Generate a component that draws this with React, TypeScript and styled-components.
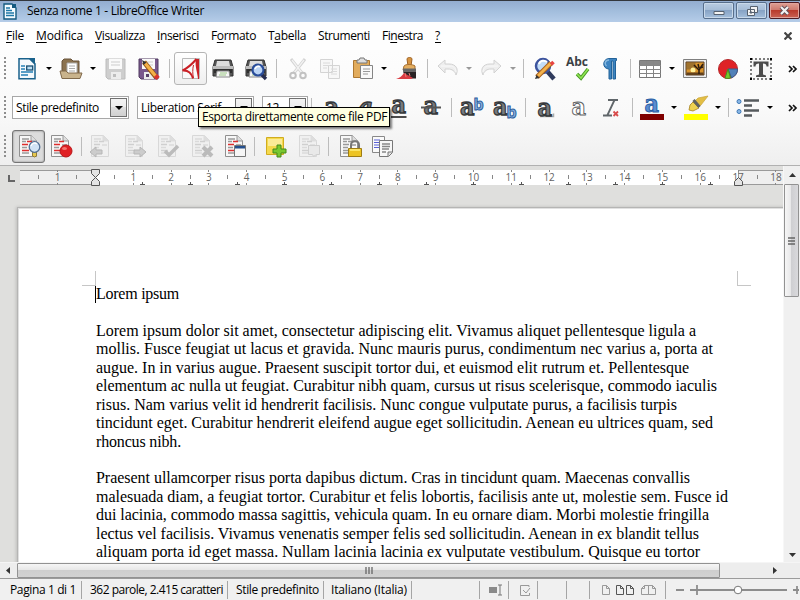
import React, { useLayoutEffect, useRef, useState } from 'react';
import styled, { createGlobalStyle, css } from 'styled-components';

const GlobalStyle = createGlobalStyle`
  * { box-sizing: border-box; }
  body { margin: 0; overflow: hidden; background: #dfdfdd; }
`;

const Window = styled.div`
  width: 800px;
  height: 600px;
  display: flex;
  flex-direction: column;
  overflow: hidden;
  color: #000;
  font: 12px/16px 'Open Sans', 'Noto Sans', sans-serif;
`;

/* Text that is tracked so that it fills a known measure. */
const Measure = styled.span`
  display: inline-block;
  flex: none;
  white-space: pre;
`;

function FitText({ width, children }: { width: number; children: React.ReactNode }) {
  const ref = useRef<HTMLSpanElement>(null);
  const [tracking, setTracking] = useState(0);
  useLayoutEffect(() => {
    const el = ref.current;
    if (!el) return;
    const range = document.createRange();
    range.selectNodeContents(el);
    const count = (el.textContent || ' ').length;
    setTracking((width - range.getBoundingClientRect().width) / count);
  }, [width]);
  return <Measure ref={ref} style={{ letterSpacing: tracking, width }}>{children}</Measure>;
}

/* ---------- Title bar ---------- */
const TitleBar = styled.header`
  height: 22px;
  flex: none;
  display: flex;
  align-items: center;
  padding-left: 3px;
  border-top: 1px solid #33373d;
  background: linear-gradient(#93add0, #a3bedd 50%, #b5cce8);
`;
const TitleText = styled.div`
  margin: 0 auto 1px 10px;
`;
const Caption = styled.div<{ $close?: boolean }>`
  width: 31px;
  height: 17px;
  margin: -2px 0 0 2px;
  display: grid;
  place-items: center;
  border: 1px solid ${p => (p.$close ? '#4d1c24' : '#586f8c')};
  border-radius: 2px;
  box-shadow: inset 0 0 0 1px ${p => (p.$close ? '#e0a49c' : '#c9d9ea')};
  background: ${p =>
    p.$close
      ? 'linear-gradient(#dfa094, #ce7a6e 45%, #b93a2c 50%, #c96355)'
      : 'linear-gradient(#b9cce2, #a6bdd7 45%, #87a3c5 50%, #a5bfdc)'};
`;
const Captions = styled.div`
  display: flex;
`;

/* ---------- Menu ---------- */
const MenuBar = styled.nav`
  height: 28px;
  flex: none;
  display: flex;
  align-items: center;
  gap: 12px;
  padding: 0 8px 0 6px;
  background: #fefefe;
  svg { margin-left: auto; margin-top: -1px; }
`;
const Key = styled.span`
  text-decoration: underline;
  text-underline-offset: 2px;
`;

/* ---------- Toolbars ---------- */
const ToolArea = styled.div`
  height: 116px;
  flex: none;
  display: flex;
  flex-direction: column;
  border-bottom: 1px solid #b1b1b1;
  background: linear-gradient(#fdfdfd, #f9f9f9 55%, #efefef);
`;
const ToolRow = styled.div<{ $h: number }>`
  height: ${p => p.$h}px;
  display: flex;
  align-items: center;
  padding-left: 4px;
`;
const Grip = styled.div`
  width: 2px;
  height: 23px;
  flex: none;
  background: repeating-linear-gradient(#8e8e8e 0 2px, transparent 2px 4px);
`;
const Slot = styled.div<{ $gap: number }>`
  width: 24px;
  height: 24px;
  flex: none;
  margin-left: ${p => p.$gap}px;
  svg { display: block; overflow: visible; }
`;
const More = styled.div<{ $gap: number }>`
  width: 10px;
  flex: none;
  margin-left: ${p => p.$gap}px;
  svg { display: block; }
`;
const Button = styled.div<{ $gap: number; $pressed?: boolean }>`
  width: 33px;
  height: 33px;
  flex: none;
  margin-left: ${p => p.$gap}px;
  display: grid;
  place-items: center;
  border: 1px solid #b5b5b5;
  border-radius: 3px;
  background: linear-gradient(#fff, #efefef);
  ${p => p.$pressed && css`
    border-color: #757575;
    background: #dcdcdc;
    box-shadow: inset 0 0 2px #777;
  `}
`;
const Separator = styled.div<{ $gap: number }>`
  width: 1px;
  height: 19px;
  flex: none;
  margin-left: ${p => p.$gap}px;
  background: #bcbcbc;
`;
const Arrow = styled.div<{ $gap: number; $dim?: boolean }>`
  width: 8px;
  flex: none;
  margin-left: ${p => p.$gap}px;
  display: flex;
  justify-content: center;
  &::after {
    content: '';
    border: 3px solid transparent;
    border-width: 3px 3px 0;
    border-top-color: ${p => (p.$dim ? '#999' : '#000')};
  }
`;
const Combo = styled.div<{ $w: number; $gap: number }>`
  width: ${p => p.$w}px;
  height: 23px;
  flex: none;
  margin-left: ${p => p.$gap}px;
  padding: 0 1px 0 3px;
  display: flex;
  align-items: center;
  justify-content: space-between;
  border: 1px solid #a8a8a8;
  background: #fff;
`;
const ComboButton = styled.div`
  width: 17px;
  height: 19px;
  display: grid;
  place-items: center;
  border: 1px solid #707070;
  background: linear-gradient(#f3f3f3, #ececec 50%, #dedede 50%, #d0d0d0);
  &::after {
    content: '';
    border: 4px solid transparent;
    border-width: 4px 4px 0;
    border-top-color: #000;
  }
`;
const TipAnchor = styled.div`
  position: relative;
  height: 0;
`;
const Tooltip = styled.div`
  position: absolute;
  left: 198px;
  top: -21px;
  width: 192px;
  height: 20px;
  padding: 1px 0 0 3px;
  border: 1px solid #000;
  background: #ffffe1;
  box-shadow: 2px 2px 2px rgba(0, 0, 0, 0.5);
`;

/* ---------- Workspace ---------- */
const Workspace = styled.main`
  height: 396px;
  flex: none;
  display: grid;
  grid-template-columns: 783px 17px;
`;
const Desk = styled.div`
  height: 396px;
  overflow: hidden;
  background: #dfdfdd;
`;
const RulerRow = styled.div`
  height: 41px;
  padding-top: 4px;
  svg { display: block; overflow: visible; }
`;
const Page = styled.article`
  width: 780px;
  height: 420px;
  margin-left: 17px;
  padding-left: 64px;
  border: solid #b5b5b4;
  border-width: 1px 0 0 1px;
  box-shadow: inset 1px 1px #e1e1e1, -1px 0 3px #bdbdbc;
  background: #fff;
`;
const Corners = styled.div`
  display: flex;
  gap: 641px;
  padding-top: 63px;
`;
const Corner = styled.i<{ $right?: boolean }>`
  width: 14px;
  height: 15px;
  border: solid #c6c6c6;
  border-width: ${p => (p.$right ? '0 0 1px 1px' : '0 1px 1px 0')};
`;
const Lines = styled.div`
  margin: -1px 0 0 13px;
  border-left: 1px solid transparent;
  font: 16px/18.45px 'Liberation Serif', serif;
`;
const Line = styled.div<{ $caret?: boolean }>`
  height: 18.45px;
  margin-left: -1px;
  border-left: 1px solid ${p => (p.$caret ? '#000' : 'transparent')};
`;
const VScroll = styled.div`
  height: 396px;
  display: flex;
  flex-direction: column;
  align-items: flex-start;
  background: #f0f0f0;
  border-left: 1px solid #f7f7f7;
`;
const HScroll = styled.div`
  height: 16px;
  flex: none;
  display: flex;
  align-items: center;
  background: #ededed;
  border-top: 1px solid #f5f5f5;
`;
const ScrollEnd = styled.div<{ $w: number; $h: number }>`
  width: ${p => p.$w}px;
  height: ${p => p.$h}px;
  flex: none;
  display: grid;
  place-items: center;
`;
const Thumb = styled.div<{ $vertical?: boolean }>`
  display: grid;
  place-items: center;
  border: 1px solid #929292;
  border-radius: 1px;
  ${p => p.$vertical
    ? css`width: 15px; height: 113px; background: linear-gradient(90deg, #f6f6f6, #e9e9ea 42%, #cfcfd2 50%, #d9d9dc);`
    : css`width: 703px; height: 15px; background: linear-gradient(#f6f6f6, #e7e7e7 45%, #cecece 50%, #d2d2d2);`}
`;
const Filler = styled.div`flex: 1;`;

/* ---------- Status bar ---------- */
const StatusBar = styled.footer`
  height: 22px;
  flex: none;
  display: flex;
  align-items: center;
  padding-top: 1px;
  border-top: 1px solid #9b9b9b;
  background: #f0f0f0;
`;
const Status = styled.div<{ $w: number; $pad?: number }>`
  width: ${p => p.$w}px;
  height: 18px;
  flex: none;
  display: flex;
  align-items: center;
  padding-left: ${p => p.$pad ?? 0}px;
  border-right: 1px solid #a5a5a5;
`;
const Zoom = styled.div`
  padding-left: 9px;
  svg { display: block; }
`;

/* ---------- Icons ---------- */
const Svg = ({ children, w = 24, h = 24 }: { children: React.ReactNode; w?: number; h?: number }) => (
  <svg width={w} height={h} viewBox={`0 0 ${w} ${h}`} fill="none">{children}</svg>
);

const WriterIcon = () => (
  <Svg w={14} h={17}>
    <path d="M1 1h8l4 4v11H1z" fill="#f5fbff" stroke="#145a80" strokeWidth="1.4" />
    <path d="M9 1v4h4V1z" fill="#145a80" />
    <path d="M3 5h4M3 7.5h6M3 10h8M3 12.5h8" stroke="#1e78a8" strokeWidth="1.3" />
  </Svg>
);
const NewDoc = () => (
  <Svg>
    <path d="M4 1.7h11l5 5v15H4z" fill="#f4f9fc" stroke="#1a628c" strokeWidth="1.5" />
    <path d="M13 1h7v7z" fill="#1a628c" />
    <path d="M6 9h4M6 12h4M6 15h12M6 18h7" stroke="#2580b5" strokeWidth="1.6" />
    <rect x="11.7" y="9" width="6" height="4" fill="#b9dcf2" stroke="#164f73" strokeWidth="1.3" />
  </Svg>
);
const OpenFolder = () => (
  <Svg>
    <path d="M3 20V4l2-2h7l2 2h6v15" fill="#8b724f" stroke="#69533a" />
    <path d="M8 6h10v11H8z" fill="#fff" stroke="#aaa" />
    <path d="M10 9h6M10 11.5h6M10 14h6" stroke="#aaa" />
    <path d="M1 14h6l2 2h14l-2 5.5H3z" fill="#c9b38c" stroke="#80694b" />
  </Svg>
);
const Floppy = ({ edit }: { edit?: boolean }) => (
  <Svg>
    <path d="M2 2h19v20H4l-2-2z" fill={edit ? '#79588c' : '#cecece'} stroke={edit ? '#513a60' : '#bcbcbc'} />
    <path d="M5 2h13v10H5z" fill="#fafafa" />
    <path d="M7 5h9M7 8h9" stroke="#ccc" />
    <path d="M7 15h10v7H7z" fill="#ececec" />
    <path d="M9 17h3v3H9z" fill={edit ? '#58406a' : '#bdbdbd'} />
    {edit && (
      <>
        <path d="M7 5 19 20" stroke="#945512" strokeWidth="5" />
        <path d="M7.5 5.5 19 19.5" stroke="#f4b047" strokeWidth="3.2" />
        <path d="m18.500 18.500 2.500 3" stroke="#d8322d" strokeWidth="4.5" />
        <path d="m5 3 1.5 5 3-2.4z" fill="#333" />
      </>
    )}
  </Svg>
);
const PdfIcon = () => (
  <Svg>
    <path d="M3.5 1.500h17v20h-17z" fill="#fafafa" stroke="#b9b9b9" />
    <path d="M17.500 2C14 6 9 11 3.500 13.500c5.500-.500 9 2.500 10.500 8" stroke="#ca2026" strokeWidth="2" />
    <path d="M17 2h3v20h-1c-.500-7-3.500-13-2-20z" fill="#ca2026" />
    <path d="M14.500 8c-1 4-1 9 0 13" stroke="#ca2026" strokeWidth="1" />
  </Svg>
);
const Printer = ({ lens }: { lens?: boolean }) => (
  <Svg>
    <path d="M4 3h16l2 7v9H2v-9z" fill="#555" stroke="#323232" />
    <path d="M6 4h12l1 5H5z" fill="#ddd" />
    <path d="M2 9h20v3H2z" fill="#bdbdbd" />
    <path d="M3 12h18v4H3z" fill="#303030" />
    <path d="M6 14h12l1 6H5z" fill="#f6f6f6" stroke="#888" />
    <path d="M9 16h7M8 18h7" stroke="#9bc785" strokeWidth="1.2" />
    {lens && (
      <>
        <path d="m17 17 5 5" stroke="#252d50" strokeWidth="3.4" />
        <circle cx="14" cy="13" r="5.5" fill="#bbd4f4" stroke="#294d9a" strokeWidth="2.2" />
        <path d="M11 12c1-3 4-3 5-2" stroke="#fff" strokeWidth="1.5" />
      </>
    )}
  </Svg>
);
const Scissors = () => (
  <Svg>
    <path d="m5 2 11 14M19 2 8 16" stroke="#d3d3d3" strokeWidth="3" />
    <path d="m6 3 10 13M18 3 8 16" stroke="#f2f2f2" strokeWidth="1.3" />
    <circle cx="7" cy="18.500" r="2.800" stroke="#c2c2c2" strokeWidth="2" />
    <circle cx="17" cy="18.500" r="2.800" stroke="#c2c2c2" strokeWidth="2" />
  </Svg>
);
const Copy = () => (
  <Svg>
    <path d="M2.5 2.5h12v13h-12zM10.500 8.500h11v13h-11z" fill="#f7f7f7" stroke="#d4d4d4" />
    <path d="M5 6h7M5 8.500h7M5 11h4M13 12h6M13 14.500h6M13 17h6" stroke="#dadada" />
  </Svg>
);
const Paste = () => (
  <Svg>
    <path d="M2.500 3.500h16v17h-16z" fill="#e2ac5d" stroke="#ae7831" />
    <path d="M6 5V3h2l1-2h4l1 2h2v3H6z" fill="#ddd" stroke="#777" />
    <path d="M9.500 8.500h12v13h-12z" fill="#fafafa" stroke="#858585" />
    <path d="M12 12h7M12 14.500h7M12 17h5" stroke="#999" strokeWidth="1.2" />
  </Svg>
);
const Brush = () => (
  <Svg>
    <path d="M12 2c0-2 5-2 5 0l-1 7h-3z" fill="#d69442" stroke="#9e6122" />
    <path d="M9 9c1-2 9-2 11 0v4H8z" fill="#e4ae60" stroke="#a66f30" />
    <path d="M8 11.500h13v3H8z" fill="#666" />
    <path d="M8 14.500h13v7H11z" fill="#292325" />
    <path d="M1 22c4-1 6-3 8-6l9 5-2 1z" fill="#d93b42" />
    <path d="m10 16 1 4m3-4 1 3" stroke="#ee7c76" />
  </Svg>
);
const Undo = ({ flip }: { flip?: boolean }) => (
  <Svg>
    <g transform={flip ? 'matrix(-1 0 0 1 24 0)' : undefined}>
      <path d="m2 9 7-6v4h4c7 0 10 5 7 11-1-4-4-6-8-6H9v4z" fill="#eee" stroke="#d2d2d2" strokeLinejoin="round" />
      <path d="M5 9h9c4 0 6 3 6 6" stroke="#f9f9f9" />
    </g>
  </Svg>
);
const FindReplace = () => (
  <Svg>
    <path d="m15 14 7 8" stroke="#303b5d" strokeWidth="4.500" />
    <circle cx="11" cy="9" r="7" fill="#c2dcf7" stroke="#3d549e" strokeWidth="2.500" />
    <path d="M7 7c1-4 6-4 8-2" stroke="#fff" strokeWidth="2" />
    <path d="m5 20 14-14" stroke="#a55e1b" strokeWidth="5" />
    <path d="m6 19 13-13" stroke="#f4b34d" strokeWidth="3" />
    <path d="m19 5 2.500 2.500" stroke="#e64443" strokeWidth="3.500" />
    <path d="m3 22 1.500-4 3 3z" fill="#333" />
  </Svg>
);
const Spell = styled.div`
  display: flex;
  flex-direction: column;
  align-items: center;
  margin: -1px -4px;
  color: #3b4144;
  font: bold 12px/12px 'Open Sans', sans-serif;
  svg { margin: 0 0 0 10px; }
`;
const Pilcrow = () => (
  <Svg>
    <path d="M11 1.500h7.500V3.500h-1v18.500H15V4h-1.500v18H11V12C4 12 4 2 11 1.500z" fill="#3d84c1" stroke="#236298" />
    <path d="M11 3c-4 0-5 4-2.500 6" stroke="#86b8df" strokeWidth="1.500" />
  </Svg>
);
const Table = () => (
  <Svg>
    <path d="M1.500 3.500h21v17h-21z" fill="#fff" stroke="#777" />
    <path d="M2 4h20v4H2z" fill="#878787" />
    <path d="M1 8.500h22M1 12.500h22M1 16.500h22M8.500 4v16M15.500 4v16" stroke="#858585" />
  </Svg>
);
const Picture = () => (
  <Svg>
    <path d="M.500 2.500h23v18H.500z" fill="#eee" stroke="#7f7f7f" />
    <path d="M3 5h18v13H3z" fill="#d9942c" stroke="#573c25" />
    <path d="M3.500 5.500h9v7h-9z" fill="#6f552f" opacity=".55" />
    <circle cx="10" cy="13" r="2.500" fill="#fff09a" />
    <path d="M3.500 15.500h17V18h-17z" fill="#62411c" />
    <path d="M16 17v-4l-5-5m5 5 4-6m-4 4-1-4m2 4 3-1" stroke="#2b1b10" strokeWidth="1.500" />
  </Svg>
);
const Chart = () => (
  <Svg>
    <circle cx="12" cy="12" r="9.500" fill="#df2226" stroke="#b5282b" />
    <path d="M12 12h9.500a9.500 9.500 0 0 1-6 8.800z" fill="#5281b8" stroke="#355e91" />
    <path d="m12 12 2.500 9c-2 .600-4 .600-5.500 0z" fill="#73c92c" stroke="#4a8d20" />
  </Svg>
);
const TextBox = () => (
  <Svg>
    <path d="M2 2h20v20H2z" fill="#f7f7f7" stroke="#000" strokeDasharray="2 2" />
    <path d="M1 1h2v2H1zM21 1h2v2h-2zM1 21h2v2H1zM21 21h2v2h-2z" fill="#000" />
    <path d="M4.500 4.500h15v5h-2c0-2-1-3-3.500-3v11l3 1v1.500H7V18.500l3-1v-11c-2.500 0-3.500 1-3.500 3h-2z" fill="#4c4c4c" />
  </Svg>
);
const Chevron = () => (
  <Svg w={10} h={8}><path d="m1 1 3 3-3 3m4-6 3 3-3 3" stroke="#111" strokeWidth="1.700" /></Svg>
);

type Kind = 'bold' | 'italic' | 'under' | 'strike' | 'super' | 'sub' | 'shadow' | 'outline' | 'color';
const BASELINE: Record<Kind, number> = {
  bold: 19, italic: 19, under: 17, strike: 18, super: 18.5, sub: 18.5, shadow: 20, outline: 19, color: 16,
};
function Letter({ kind }: { kind: Kind }) {
  const small = kind === 'super' || kind === 'sub';
  const outline = kind === 'outline';
  const blue = kind === 'color';
  const font = 'DejaVu Serif, serif';
  const y = BASELINE[kind];
  return (
    <Svg>
      {blue && <path d="M0 18h24v6H0z" fill="#800000" />}
      {kind === 'shadow' && <path d="M7 20.500h13.500v-3" stroke="#aaa" strokeWidth="1.500" />}
      <text
        x={small ? 1 : 4.5} y={y} fontFamily={font} fontWeight="bold" fontSize="25"
        fontStyle={kind === 'italic' ? 'italic' : 'normal'}
        fill={outline ? '#fff' : blue ? '#5b8dd1' : '#777b7e'}
        stroke={outline ? '#5f6264' : blue ? '#285da4' : '#35383a'} strokeWidth={outline || blue ? 1 : 1.3}
        textLength={14.500} lengthAdjust="spacingAndGlyphs"
      >a</text>
      {small && (
        <text x="14.500" y={kind === 'super' ? 13.500 : 22} fontFamily="Open Sans, sans-serif" fontWeight="bold" fontSize="16"
          fill="#8db3e0" stroke="#2d609e" strokeWidth="1">b</text>
      )}
      {kind === 'under' && <path d="M4 21h15.500" stroke="#4c4c4c" strokeWidth="2" />}
      {kind === 'strike' && <path d="M2 11.500h20" stroke="#555" strokeWidth="2" />}
    </Svg>
  );
}
const ClearFormat = () => (
  <Svg>
    <path d="M7 4h10M2 19.500h9M13.500 4 6.500 19" stroke="#60666a" strokeWidth="1.800" />
    <path d="m12.500 15.500 4.500 4.500m0-4.500-4.500 4.500" stroke="#d84b4b" strokeWidth="1.800" />
  </Svg>
);
const Highlight = () => (
  <Svg>
    <path d="M14 2 24 0l-7 9-5 4-4-5z" fill="#e3be45" stroke="#c9a53a" strokeWidth=".7" />
    <path d="m9 6 6 6-6 3-4-1 1-5z" fill="#eed250" stroke="#a6821e" strokeWidth=".8" />
    <path d="m9.500 4 6 7" stroke="#5e6262" strokeWidth="3" />
    <path d="M0 18h24v6H0z" fill="#ff0" />
  </Svg>
);
const Bullets = () => (
  <Svg>
    <circle cx="3" cy="5.500" r="2" fill="#8bb8e6" stroke="#3e78b6" />
    <circle cx="3" cy="15.500" r="2" fill="#8bb8e6" stroke="#3e78b6" />
    <path d="M8 4.500h15M8 9.500h8M8 14.500h15M8 19.500h8" stroke="#555a5d" strokeWidth="2.300" />
  </Svg>
);

type Mark = 'lens' | 'record' | 'left' | 'right' | 'check' | 'x' | 'window' | 'bubble' | 'lock';
function ChangeDoc({ mark }: { mark: Mark }) {
  const dim = ['left', 'right', 'check', 'x', 'bubble'].includes(mark);
  const line = dim ? '#dadada' : '#9a9a9a';
  const red = dim ? '#cfcfcf' : mark === 'lock' ? '#999' : '#dd2e2e';
  return (
    <Svg>
      <path d="M2.500 1.500h12l5 5v16h-17z" fill={dim ? '#f0f0f0' : '#f7f7f7'} stroke={dim ? '#d8d8d8' : '#909090'} />
      <path d="M14 1v6h6" fill="#ddd" stroke={dim ? '#ddd' : '#999'} />
      <path d="M5 5h7M5 7.500h4M13 11h5M5 13.500h5M5 19h7" stroke={line} strokeWidth="1.300" />
      <path d="M10 7.500h5M5 10.500h6M5 16.500h7" stroke={red} strokeWidth="1.500" />
      {mark === 'lens' && (
        <>
          <path d="M15.500 18h4v4l-2 1-2-1z" fill="#e5c74f" stroke="#907a35" />
          <circle cx="17.500" cy="13" r="5.300" fill="#d2e3f4" stroke="#547195" strokeWidth="1.300" />
          <path d="M14 12c1-3 4-4 6-2" stroke="#fff" strokeWidth="1.500" />
        </>
      )}
      {mark === 'record' && <><circle cx="17" cy="17" r="6" fill="#e02024" stroke="#ba1719" /><ellipse cx="15.500" cy="14.500" rx="2.500" ry="1.500" fill="#f37771" /></>}
      {mark === 'left' && <path d="m1 18 6-5v3h6v4H7v3z" fill="#ccc" stroke="#b6b6b6" />}
      {mark === 'right' && <path d="m23 18-6-5v3h-6v4h6v3z" fill="#ccc" stroke="#b6b6b6" />}
      {mark === 'check' && <path d="m9 17 4 4 9-9" stroke="#bbb" strokeWidth="3.500" />}
      {mark === 'x' && <path d="m13 13 9 9m0-9-9 9" stroke="#bbb" strokeWidth="4" />}
      {mark === 'window' && <><path d="M11.500 11.500h11v11h-11z" fill="#f6f6f6" stroke="#777" /><path d="M12 12h10v2.500H12z" fill="#244f8d" /></>}
      {mark === 'bubble' && <path d="M11.500 11.500h11v9h-3l-3 2-1-2h-4z" fill="#e9e9e9" stroke="#cfcfcf" />}
      {mark === 'lock' && <><path d="M13 15v-4c0-5 8-5 8 0v4" stroke="#777" strokeWidth="2" /><path d="M10.500 14.500h13v8h-13z" fill="#edc424" stroke="#9e7c14" /><path d="M12 16h10" stroke="#fff07d" strokeWidth="1.500" /></>}
    </Svg>
  );
}
const AddNote = () => (
  <Svg>
    <path d="M2.500 3.500h17v17h-17z" fill="#f5d94d" stroke="#d0ac20" />
    <path d="M4 5h14v7H4z" fill="#fceb96" />
    <path d="M13 11h4v4h5v4h-5v4h-4v-4H9v-4h4z" fill="#78c82f" stroke="#458918" />
  </Svg>
);
const Compare = () => (
  <Svg>
    <path d="M2.500 2.500h12v16h-12z" fill="#fafafa" stroke="#888" />
    <path d="M4 6h6M4 8.500h5M4 11h5M4 13.500h5" stroke="#5960d5" strokeWidth="1.200" />
    <path d="M9.500 6.500h13v12l-4 4h-9z" fill="#f7f7f7" stroke="#777" />
    <path d="M12 10h8M12 12.500h8M12 15h7M12 18h4" stroke="#888" strokeWidth="1.300" />
    <path d="M18 22v-4h4" fill="#ddd" stroke="#777" />
  </Svg>
);

const CM = 37.8;
function Ruler() {
  const zero = 95.5;
  return (
    <svg width="783" height="17" viewBox="0 0 783 17" fill="none" shapeRendering="crispEdges">
      <path d="M9 5v6h6" stroke="#666" strokeWidth="2" />
      <path d="M20 0h76v15H20z" fill="#efefef" />
      <path d="M96 0h642v15H96z" fill="#fff" />
      <path d="M738 0h45v15h-45z" fill="#efefef" />
      <path d="M20 .500h76M20 14.500h76M738.500 0v15M738 .500h45M738 14.500h45" stroke="#9a9a9a" />
      {Array.from({ length: 20 }, (_, i) => i - 1).map(i => {
        const x = zero + i * CM;
        return (
          <g key={i}>
            {i !== 0 && <path d={`M${x} 0v2M${x} 13v2`} stroke="#888" />}
            {x - CM / 2 > 25 && <path d={`M${x - CM / 2} 5v4`} stroke="#888" />}
            {i !== 0 && (
              <text x={x} y="11" fontFamily="Open Sans, sans-serif" fontSize="10" textAnchor="middle" fill="#636363">
                {Math.abs(i)}
              </text>
            )}
          </g>
        );
      })}
      {Array.from({ length: 13 }, (_, i) => zero + (i + 1) * 47.28).map(x => (
        <path key={x} d={`M${x} 12v3M${x - 2.500} 14.500h5`} stroke="#555" />
      ))}
      <g shapeRendering="auto" fill="#e4e4e4" stroke="#555">
        <path d="M91.500-.500h8v4l-4 4-4-4zM91.500 15.500h8v-4l-4-4-4 4z" />
        <path d="M734.500 15.500h8v-4l-4-4-4 4z" />
      </g>
    </svg>
  );
}

const MENUS: [string, string, string, number][] = [
  ['', 'F', 'ile', 18], ['', 'M', 'odifica', 47], ['', 'V', 'isualizza', 50], ['', 'I', 'nserisci', 42],
  ['F', 'o', 'rmato', 45], ['T', 'a', 'bella', 38], ['Strumenti', '', '', 52], ['Fi', 'n', 'estra', 41], ['', '?', '', 6],
];

const TEXT: [string, number][] = [
  ['Lorem ipsum', 83],
  ['', 0],
  ['Lorem ipsum dolor sit amet, consectetur adipiscing elit. Vivamus aliquet pellentesque ligula a', 600],
  ['mollis. Fusce feugiat ut lacus et gravida. Nunc mauris purus, condimentum nec varius a, porta at', 617],
  ['augue. In in varius augue. Praesent suscipit tortor dui, et euismod elit rutrum et. Pellentesque', 593],
  ['elementum ac nulla ut feugiat. Curabitur nibh quam, cursus ut risus scelerisque, commodo iaculis', 621],
  ['risus. Nam varius velit id hendrerit facilisis. Nunc congue vulputate purus, a facilisis turpis', 581],
  ['tincidunt eget. Curabitur hendrerit eleifend augue eget sollicitudin. Aenean eu ultrices quam, sed', 617],
  ['rhoncus nibh.', 85],
  ['', 0],
  ['Praesent ullamcorper risus porta dapibus dictum. Cras in tincidunt quam. Maecenas convallis', 594],
  ['malesuada diam, a feugiat tortor. Curabitur et felis lobortis, facilisis ante ut, molestie sem. Fusce id', 632],
  ['dui lacinia, commodo massa sagittis, vehicula quam. In eu ornare diam. Morbi molestie fringilla', 613],
  ['lectus vel facilisis. Vivamus venenatis semper felis sed sollicitudin. Aenean in ex blandit tellus', 603],
  ['aliquam porta id eget massa. Nullam lacinia lacinia ex vulputate vestibulum. Quisque eu tortor', 604],
];

const Tri = ({ d }: { d: string }) => <Svg w={7} h={7}><path d={d} fill="#333" /></Svg>;

export default function App() {
  return (
    <Window>
      <GlobalStyle />
      <TitleBar>
        <WriterIcon />
        <TitleText><FitText width={177}>Senza nome 1 - LibreOffice Writer</FitText></TitleText>
        <Captions>
          <Caption><Svg w={12} h={10}><path d="M1 5.500h10v3H1z" fill="#f3f3f3" stroke="#56616f" /></Svg></Caption>
          <Caption><Svg w={14} h={12}><path d="M5.500 1.500h7v6h-7zM2.500 4.500h7v6h-7z" fill="#f2f2f2" stroke="#56616f" /><path d="M5 7h2v1H5z" fill="#6c829d" stroke="#56616f" /></Svg></Caption>
          <Caption $close><Svg w={13} h={11}><path d="m3 2 7 7m0-7-7 7" stroke="#604d56" strokeWidth="4" /><path d="m3 2 7 7m0-7-7 7" stroke="#f2f2f2" strokeWidth="2.200" /></Svg></Caption>
        </Captions>
      </TitleBar>
      <MenuBar>
        {MENUS.map(([a, k, b, w]) => <FitText key={a + k + b} width={w}>{a}<Key>{k}</Key>{b}</FitText>)}
        <Svg w={8} h={8}><path d="m.500.500 7 7m0-7-7 7" stroke="#444" strokeWidth="2.200" /></Svg>
      </MenuBar>
      <ToolArea>
        <ToolRow $h={37}>
          <Grip />
          <Slot $gap={9}><NewDoc /></Slot><Arrow $gap={6} />
          <Slot $gap={6}><OpenFolder /></Slot><Arrow $gap={6} />
          <Slot $gap={7}><Floppy /></Slot>
          <Slot $gap={9}><Floppy edit /></Slot><Separator $gap={8} />
          <Button $gap={4}><PdfIcon /></Button>
          <Slot $gap={4}><Printer /></Slot>
          <Slot $gap={9}><Printer lens /></Slot><Separator $gap={8} />
          <Slot $gap={9}><Scissors /></Slot>
          <Slot $gap={8}><Copy /></Slot>
          <Slot $gap={9}><Paste /></Slot><Arrow $gap={5} />
          <Slot $gap={7}><Brush /></Slot><Separator $gap={8} />
          <Slot $gap={8}><Undo /></Slot><Arrow $gap={5} $dim />
          <Slot $gap={6}><Undo flip /></Slot><Arrow $gap={6} $dim /><Separator $gap={6} />
          <Slot $gap={8}><FindReplace /></Slot>
          <Slot $gap={9}><Spell><FitText width={22}>Abc</FitText><Svg w={14} h={12}><path d="m2 6 4 4 7-9" stroke="#489924" strokeWidth="3.500" /><path d="m2 6 4 4 7-9" stroke="#91e654" strokeWidth="1.500" /></Svg></Spell></Slot>
          <Slot $gap={9}><Pilcrow /></Slot><Separator $gap={8} />
          <Slot $gap={7}><Table /></Slot><Arrow $gap={6} />
          <Slot $gap={7}><Picture /></Slot>
          <Slot $gap={9}><Chart /></Slot>
          <Slot $gap={9}><TextBox /></Slot>
          <More $gap={15}><Chevron /></More>
        </ToolRow>
        <ToolRow $h={41}>
          <Grip />
          <Combo $w={117} $gap={6}><FitText width={83}>Stile predefinito</FitText><ComboButton /></Combo>
          <Combo $w={117} $gap={8}><FitText width={80}>Liberation Serif</FitText><ComboButton /></Combo>
          <Combo $w={46} $gap={8}><FitText width={13}>12</FitText><ComboButton /></Combo>
          <Separator $gap={3} />
          <Slot $gap={8}><Letter kind="bold" /></Slot>
          <Slot $gap={10}><Letter kind="italic" /></Slot>
          <Slot $gap={9}><Letter kind="under" /></Slot>
          <Slot $gap={8}><Letter kind="strike" /></Slot><Separator $gap={8} />
          <Slot $gap={7}><Letter kind="super" /></Slot>
          <Slot $gap={9}><Letter kind="sub" /></Slot><Separator $gap={9} />
          <Slot $gap={7}><Letter kind="shadow" /></Slot>
          <Slot $gap={10}><Letter kind="outline" /></Slot>
          <Slot $gap={10}><ClearFormat /></Slot><Separator $gap={7} />
          <Slot $gap={7}><Letter kind="color" /></Slot><Arrow $gap={6} />
          <Slot $gap={6}><Highlight /></Slot><Arrow $gap={6} /><Separator $gap={6} />
          <Slot $gap={7}><Bullets /></Slot><Arrow $gap={6} />
          <More $gap={14}><Chevron /></More>
        </ToolRow>
        <TipAnchor><Tooltip><FitText width={185}>Esporta direttamente come file PDF</FitText></Tooltip></TipAnchor>
        <ToolRow $h={36}>
          <Grip />
          <Button $gap={6} $pressed><ChangeDoc mark="lens" /></Button>
          <Slot $gap={4}><ChangeDoc mark="record" /></Slot><Separator $gap={8} />
          <Slot $gap={7}><ChangeDoc mark="left" /></Slot>
          <Slot $gap={10}><ChangeDoc mark="right" /></Slot>
          <Slot $gap={9}><ChangeDoc mark="check" /></Slot>
          <Slot $gap={10}><ChangeDoc mark="x" /></Slot>
          <Slot $gap={9}><ChangeDoc mark="window" /></Slot><Separator $gap={7} />
          <Slot $gap={9}><AddNote /></Slot>
          <Slot $gap={9}><ChangeDoc mark="bubble" /></Slot><Separator $gap={7} />
          <Slot $gap={9}><ChangeDoc mark="lock" /></Slot>
          <Slot $gap={8}><Compare /></Slot>
        </ToolRow>
      </ToolArea>
      <Workspace>
        <Desk>
          <RulerRow><Ruler /></RulerRow>
          <Page>
            <Corners><Corner /><Corner $right /></Corners>
            <Lines>
              {TEXT.map(([line, w], i) => (
                <Line key={i} $caret={i === 0}>{line && <FitText width={w}>{line}</FitText>}</Line>
              ))}
            </Lines>
          </Page>
        </Desk>
        <VScroll>
          <ScrollEnd $w={16} $h={18}><Tri d="M0 5 3.500 1 7 5z" /></ScrollEnd>
          <Thumb $vertical><Svg w={7} h={8}><path d="M0 1h7M0 4h7M0 7h7" stroke="#666" strokeWidth="1.300" /></Svg></Thumb>
          <Filler />
          <ScrollEnd $w={16} $h={16}><Tri d="M0 2 3.500 6 7 2z" /></ScrollEnd>
        </VScroll>
      </Workspace>
      <HScroll>
        <ScrollEnd $w={17} $h={15}><Tri d="M5 0 1 3.500 5 7z" /></ScrollEnd>
        <Thumb><Svg w={8} h={7}><path d="M1 0v7M4 0v7M7 0v7" stroke="#666" strokeWidth="1.300" /></Svg></Thumb>
        <Filler />
        <ScrollEnd $w={17} $h={15}><Tri d="M2 0 6 3.500 2 7z" /></ScrollEnd>
        <ScrollEnd $w={17} $h={15}>{null}</ScrollEnd>
      </HScroll>
      <StatusBar>
        <Status $w={82} $pad={10}><FitText width={66}>Pagina 1 di 1</FitText></Status>
        <Status $w={146} $pad={8}><FitText width={133}>362 parole, 2.415 caratteri</FitText></Status>
        <Status $w={96} $pad={8}><FitText width={83}>Stile predefinito</FitText></Status>
        <Status $w={88} $pad={7}><FitText width={76}>Italiano (Italia)</FitText></Status>
        <Status $w={68} />
        <Status $w={29} $pad={9}><Svg w={13} h={12}><path d="M0 3h8v6H0z" fill="#8a8a8a" /><path d="M9 1h4M11 1v10M9 11h4" stroke="#777" /></Svg></Status>
        <Status $w={29} $pad={10}><Svg w={12} h={13}><path d="M10 3V1.500H1.500v10h9V9M4 6l3 3 4-5" stroke="#999" /></Svg></Status>
        <Status $w={29} />
        <Status $w={23} />
        <Status $w={76} $pad={12}>
          <Svg w={56} h={12}>
            <path d="M.500 1.500h4l3 3v6h-7zM4.500 1.500v3h3" stroke="#999" />
            <path d="M14.500 1.500h4l3 3v6h-7zM18.500 1.500v3h3M24.500 1.500h4l3 3v6h-7zM28.500 1.500v3h3" stroke="#555" />
            <path d="M46.500 10.500h-7v-6l3-3h4zM42.500 1.500v3h-3M46.500 1.500h4l3 3v6h-7zM50.500 1.500v3h3" stroke="#999" />
          </Svg>
        </Status>
        <Zoom>
          <Svg w={124} h={14}>
            <path d="M1 7h8M15 7h97M22 2v10M118 7h8M122 3v8" stroke="#8d8d8d" strokeWidth="1.800" />
            <circle cx="63" cy="7" r="3.800" fill="#fff" stroke="#777" />
          </Svg>
        </Zoom>
      </StatusBar>
    </Window>
  );
}
